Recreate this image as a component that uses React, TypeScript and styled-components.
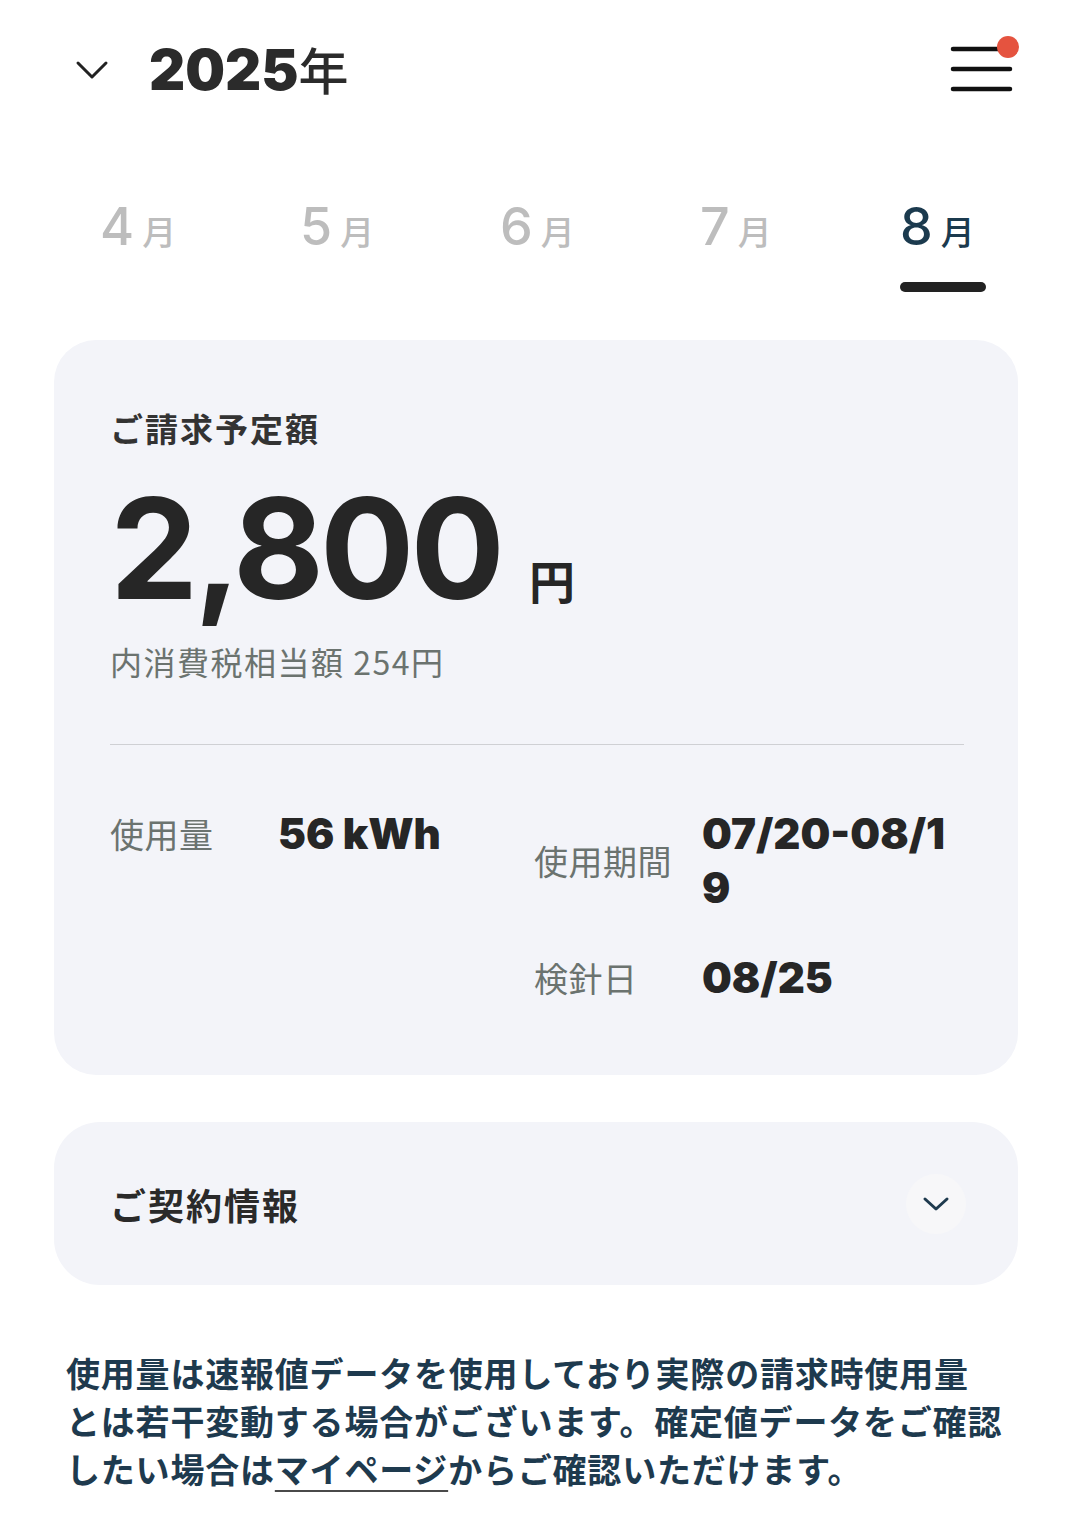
import React, { useState } from "react";
import styled, { createGlobalStyle } from "styled-components";

const GlobalStyle = createGlobalStyle`
  body {
    margin: 0;
    background: #ffffff;
    font-family: "Inter", "Noto Sans CJK JP", sans-serif;
    color: #262626;
  }
`;

const JP = `"Noto Sans CJK JP", "Noto Sans", sans-serif`;
const NUM = `"Inter", "Liberation Sans", sans-serif`;

const Page = styled.div`
  width: 1072px;
  padding-bottom: 40px;
`;

const Header = styled.header`
  height: 140px;
  display: flex;
  align-items: center;
  padding: 0 48px 0 75px;
`;

const YearToggle = styled.button`
  display: flex;
  align-items: center;
  gap: 40px;
  background: none;
  border: none;
  padding: 0;
  cursor: pointer;
`;

const Year = styled.span`
  font-family: ${NUM};
  font-weight: 900;
  font-size: 56px;
  color: #2b2b2b;
  line-height: 1;
`;

const YearUnit = styled.span`
  font-family: ${JP};
  font-weight: 500;
  font-size: 50px;
`;

const MenuButton = styled.button`
  margin-left: auto;
  background: none;
  border: none;
  padding: 0;
  display: flex;
  cursor: pointer;
`;

const Tabs = styled.nav`
  display: flex;
  margin-top: 57px;
  padding-left: 43px;
`;

const Tab = styled.button<{ active: boolean }>`
  width: 200px;
  display: flex;
  flex-direction: column;
  align-items: center;
  background: none;
  border: none;
  padding: 0;
  cursor: pointer;
  color: ${({ active }) => (active ? "#1b3a4e" : "#bdbdbd")};
`;

const TabInner = styled.span`
  display: flex;
  flex-direction: column;
  align-items: flex-start;
`;

const TabLabel = styled.span`
  display: flex;
  align-items: baseline;
  height: 60px;
`;

const TabNum = styled.span`
  font-family: ${NUM};
  font-weight: 500;
  font-size: 52px;
  line-height: 60px;
`;

const TabUnit = styled.span`
  font-family: ${JP};
  font-weight: 500;
  font-size: 34px;
  line-height: 1;
  margin-left: 8px;
`;

const TabBar = styled.span<{ active: boolean }>`
  width: 86px;
  height: 10px;
  border-radius: 5px;
  margin-top: 25px;
  background: ${({ active }) => (active ? "#222222" : "transparent")};
`;

const Card = styled.section`
  margin: 48px 54px 0;
  background: #f3f4f9;
  border-radius: 42px;
  padding: 69px 54px 70px 56px;
`;

const CardTitle = styled.h2`
  margin: 0;
  font-family: ${JP};
  font-weight: 700;
  font-size: 33px;
  line-height: 38px;
  letter-spacing: 2px;
  color: #333333;
`;

const Amount = styled.div`
  display: flex;
  align-items: baseline;
  margin-top: 31px;
  color: #262626;
`;

const AmountValue = styled.span`
  font-family: ${NUM};
  font-weight: 700;
  font-size: 140px;
  line-height: 1;
  letter-spacing: -4px;
`;

const AmountUnit = styled.span`
  font-family: ${JP};
  font-weight: 700;
  font-size: 46px;
  line-height: 1;
  margin-left: 28px;
`;

const Tax = styled.p`
  margin: 20px 0 0;
  font-family: ${JP};
  font-size: 32px;
  line-height: 46px;
  letter-spacing: 1.5px;
  color: #6b736f;
`;

const Divider = styled.hr`
  margin: 60px 0 0;
  border: none;
  border-top: 1px solid #cfd0d4;
`;

const Details = styled.div`
  display: grid;
  grid-template-columns: 424px 1fr;
  margin-top: 62px;
`;

const DetailGroup = styled.dl<{ labelWidth: number }>`
  margin: 0;
  display: grid;
  grid-template-columns: ${({ labelWidth }) => labelWidth}px 1fr;
  row-gap: 36px;
  align-items: center;
  align-content: start;
  padding-right: 6px;
`;

const Label = styled.dt`
  font-family: ${JP};
  font-size: 34px;
  line-height: 54px;
  letter-spacing: 0.5px;
  color: #6b736f;
`;

const Value = styled.dd`
  margin: 0;
  font-family: ${NUM};
  font-weight: 900;
  font-size: 42px;
  line-height: 54px;
  color: #262626;
  word-break: break-all;
`;

const Accordion = styled.section`
  margin: 47px 54px 0;
  height: 163px;
  background: #f3f4f9;
  border-radius: 46px;
  display: flex;
  align-items: center;
  justify-content: space-between;
  padding: 0 52px 0 56px;
  box-sizing: border-box;
`;

const AccordionTitle = styled.h2`
  margin: 0;
  font-family: ${JP};
  font-weight: 700;
  font-size: 36px;
  letter-spacing: 2px;
  color: #2a2a2a;
`;

const RoundButton = styled.button`
  width: 60px;
  height: 60px;
  border-radius: 50%;
  border: none;
  background: #f7f7f9;
  display: flex;
  align-items: center;
  justify-content: center;
  cursor: pointer;
`;

const Note = styled.p`
  margin: 64px 0 0;
  padding: 0 40px 0 66px;
  font-family: ${JP};
  font-weight: 700;
  font-size: 34px;
  line-height: 48px;
  letter-spacing: 0.8px;
  color: #1e3a4e;
`;

const NoteLink = styled.a`
  color: inherit;
  text-decoration: underline;
  text-decoration-color: #4a4a4a;
  text-decoration-thickness: 2px;
  text-underline-offset: 7px;
`;

const months = [4, 5, 6, 7, 8];

export default function App() {
  const [month, setMonth] = useState(8);

  return (
    <Page>
      <GlobalStyle />
      <Header>
        <YearToggle>
          <svg width="34" height="20" viewBox="0 0 34 20">
            <polyline
              points="3,3 17,17 31,3"
              fill="none"
              stroke="#222"
              strokeWidth="3"
              strokeLinecap="round"
              strokeLinejoin="round"
            />
          </svg>
          <Year>
            2025<YearUnit>年</YearUnit>
          </Year>
        </YearToggle>
        <MenuButton aria-label="menu">
          <svg width="76" height="70" viewBox="0 0 76 70">
            <g stroke="#111" strokeWidth="4.5" strokeLinecap="round">
              <line x1="5" y1="14" x2="62" y2="14" />
              <line x1="5" y1="34" x2="62" y2="34" />
              <line x1="5" y1="54" x2="62" y2="54" />
            </g>
            <circle cx="60" cy="12" r="11" fill="#e5533f" />
          </svg>
        </MenuButton>
      </Header>

      <Tabs>
        {months.map((m) => (
          <Tab key={m} active={m === month} onClick={() => setMonth(m)}>
            <TabInner>
              <TabLabel>
                <TabNum>{m}</TabNum>
                <TabUnit>月</TabUnit>
              </TabLabel>
              <TabBar active={m === month} />
            </TabInner>
          </Tab>
        ))}
      </Tabs>

      <Card>
        <CardTitle>ご請求予定額</CardTitle>
        <Amount>
          <AmountValue>2,800</AmountValue>
          <AmountUnit>円</AmountUnit>
        </Amount>
        <Tax>内消費税相当額 254円</Tax>
        <Divider />
        <Details>
          <DetailGroup labelWidth={168}>
            <Label>使用量</Label>
            <Value>56 kWh</Value>
          </DetailGroup>
          <DetailGroup labelWidth={168}>
            <Label>使用期間</Label>
            <Value>07/20-08/19</Value>
            <Label>検針日</Label>
            <Value>08/25</Value>
          </DetailGroup>
        </Details>
      </Card>

      <Accordion>
        <AccordionTitle>ご契約情報</AccordionTitle>
        <RoundButton aria-label="open">
          <svg width="28" height="16" viewBox="0 0 28 16">
            <polyline
              points="3,3 14,13 25,3"
              fill="none"
              stroke="#1e3a4e"
              strokeWidth="3"
              strokeLinecap="round"
              strokeLinejoin="round"
            />
          </svg>
        </RoundButton>
      </Accordion>

      <Note>
        使用量は速報値データを使用しており実際の請求時使用量
        <br />
        とは若干変動する場合がございます。確定値データをご確認
        <br />
        したい場合は<NoteLink href="#">マイページ</NoteLink>
        からご確認いただけます。
      </Note>
    </Page>
  );
}
